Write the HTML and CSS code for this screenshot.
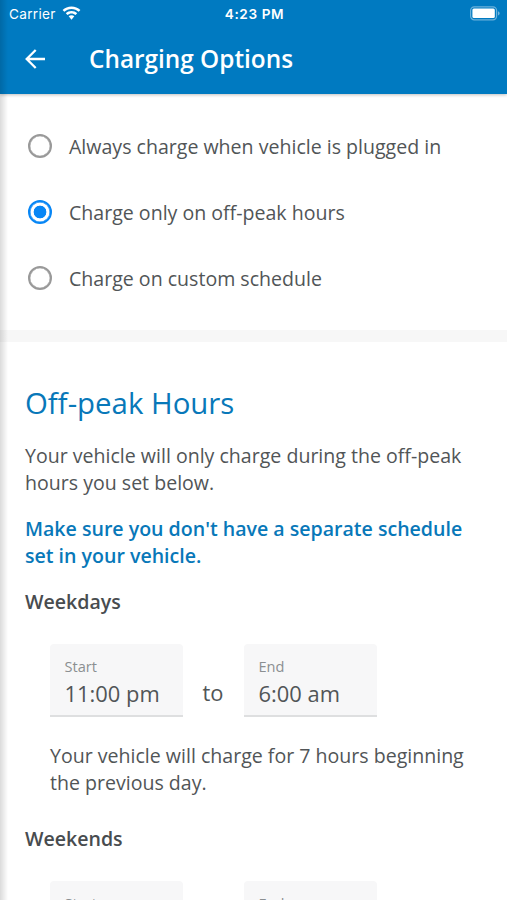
FILE: index.html
```html
<!DOCTYPE html>
<html lang="en">
<head>
<meta charset="utf-8">
<title>Charging Options</title>
<link rel="stylesheet" href="styles.css">
</head>
<body>
<div class="screen">
  <header class="header">
    <div class="status">
      <div class="carrier"><span>Carrier</span>
        <svg width="19" height="15" viewBox="0 0 19 15" fill="#fff"><path d="M9.500 0.400C6.100 0.400 2.900 1.700.6 3.900L2.300 5.800C4.200 4 6.700 2.900 9.500 2.900S14.800 4 16.700 5.800L18.400 3.900C16.100 1.700 12.900.4 9.500.4Z"/><path d="M9.500 4.900C7.300 4.900 5.300 5.700 3.800 7.200L5.500 9C6.600 8 8 7.400 9.500 7.400S12.400 8 13.500 9L15.200 7.200C13.700 5.700 11.700 4.900 9.500 4.900Z"/><path d="M9.500 9.200C8.400 9.200 7.400 9.600 6.700 10.300L9.500 13.800 12.300 10.300C11.600 9.600 10.600 9.200 9.500 9.200Z"/></svg>
      </div>
      <span class="clock">4:23 PM</span>
      <svg class="battery" width="31" height="15" viewBox="0 0 31 15"><rect x="1.600" y=".8" width="26" height="13" rx="3.700" fill="none" stroke="#fff" stroke-opacity=".42" stroke-width="1.200"/><rect x="3.400" y="2.600" width="22.400" height="9.400" rx="1.500" fill="#fff"/><path d="M29 5.200C31.200 6 31.200 8.600 29 9.400Z" fill="#fff" fill-opacity=".45"/></svg>
    </div>
    <div class="appbar">
      <svg class="back" width="22" height="22" viewBox="0 0 22 22" fill="none" stroke="#fff" stroke-width="2.300"><path d="M21 11H3M11.700 2L2.700 11L11.700 20"/></svg>
      <h1 class="title">Charging Options</h1>
    </div>
  </header>
  <main>
    <div class="options">
      <div class="option"><span class="radio"></span><span>Always charge when vehicle is plugged in</span></div>
      <div class="option"><span class="radio checked"></span><span>Charge only on off-peak hours</span></div>
      <div class="option"><span class="radio"></span><span>Charge on custom schedule</span></div>
    </div>
    <section class="hours">
      <h2 class="heading">Off-peak Hours</h2>
      <p class="text intro">Your vehicle will only charge during the off-peak<br>hours you set below.</p>
      <p class="text notice">Make sure you don't have a separate schedule<br>set in your vehicle.</p>
      <h3 class="day">Weekdays</h3>
      <div class="range">
        <div class="field"><span class="label">Start</span><span class="value">11:00 pm</span></div>
        <span class="to">to</span>
        <div class="field"><span class="label">End</span><span class="value">6:00 am</span></div>
      </div>
      <p class="text summary">Your vehicle will charge for 7 hours beginning<br>the previous day.</p>
      <h3 class="day">Weekends</h3>
      <div class="range">
        <div class="field"><span class="label">Start</span></div>
        <span class="to"></span>
        <div class="field"><span class="label">End</span></div>
      </div>
    </section>
  </main>
  <div class="edge"></div>
</div>
</body>
</html>
```
FILE: styles.css
```css
* { box-sizing: border-box; }
body { margin: 0; font-family: "Open Sans", sans-serif; color: #515557; background: #fff; }
h1, h2, h3, p { margin: 0; }
svg { display: block; flex: none; }
.screen { position: relative; width: 507px; height: 900px; overflow: hidden; white-space: nowrap; }
.header { height: 94px; background: #007ac1; color: #fff; box-shadow: 0 1px 3px rgba(0, 0, 0, .25); }
.status { height: 27px; display: grid; grid-template-columns: 1fr auto 1fr; align-items: center; padding: 0 7px 0 9px; font-family: Inter, sans-serif; font-size: 13.6px; }
.carrier { display: flex; align-items: center; gap: 6px; letter-spacing: .3px; }
.clock { font-weight: 600; letter-spacing: .6px; }
.battery { justify-self: end; }
.appbar { height: 63px; display: flex; align-items: center; padding-left: 24px; }
.title { margin-left: 43px; font-size: 24.35px; line-height: 32px; font-weight: 600; }
.back { margin-top: 1px; }
.options { height: 236px; padding-top: 19px; }
.option { height: 66px; display: flex; align-items: center; gap: 17px; padding-left: 28px; font-size: 19.57px; }
.radio { flex: none; width: 24px; height: 24px; border: 2px solid #999; box-shadow: inset 0 0 0 .3px #999; border-radius: 50%; }
.checked { border-color: #0786f5; box-shadow: inset 0 0 0 .5px #0786f5; background: radial-gradient(circle, #0786f5 6px, transparent 6.700px); }
.hours { border-top: 12px solid #f7f7f7; padding: 40px 25px 0; }
.heading { font-size: 29.4px; line-height: 42px; font-weight: 400; color: #0878b9; }
.text { font-size: 19.57px; line-height: 26.500px; }
.intro { margin-top: 19px; }
.notice { margin-top: 20px; font-weight: 600; color: #0878b9; }
.day { margin-top: 20px; font-size: 19.57px; line-height: 26px; font-weight: 600; color: #484c4f; }
.range { display: flex; margin: 29px 0 0 25px; }
.field { width: 133px; height: 73px; padding: 12px 14.500px 0; background: #f7f7f8; border-bottom: 2px solid #dedfe0; border-radius: 4px 4px 0 0; display: flex; flex-direction: column; }
.label { font-size: 14.6px; line-height: 20px; color: #8b8f91; }
.value { margin-top: 2px; font-size: 21.9px; line-height: 32px; }
.to { width: 60px; margin-right: 1px; padding-top: 33px; text-align: center; font-size: 21.9px; line-height: 32px; }
.summary { margin: 26px 0 0 25px; }
.summary + .day { margin-top: 30px; }
.edge { position: absolute; left: 0; top: 0; bottom: 0; width: 8px; background: linear-gradient(90deg, rgba(0, 0, 0, .14), rgba(0, 0, 0, 0)); }
```
